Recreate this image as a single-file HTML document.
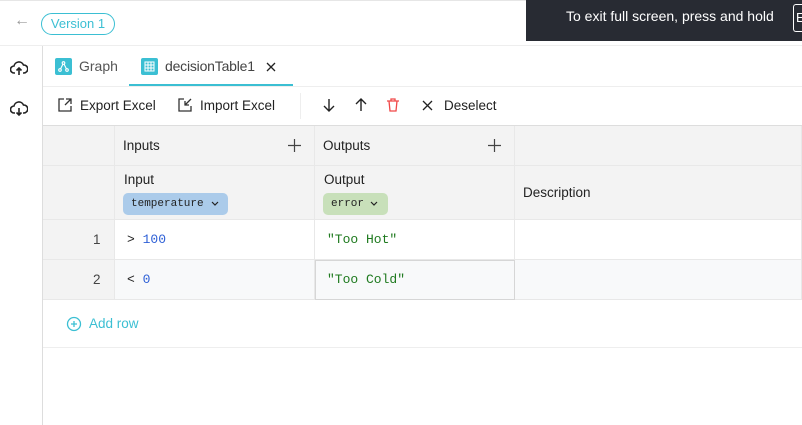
<!DOCTYPE html>
<html><head><meta charset="utf-8"><style>
*{box-sizing:border-box;margin:0;padding:0}
body{width:802px;height:425px;overflow:hidden;background:#fff;font-family:"Liberation Sans",sans-serif;font-size:13.5px;color:#222;position:relative}
.abs{position:absolute}
.mono{font-family:"Liberation Mono",monospace}
.cell{position:absolute;border-right:1px solid #e8e8e8;border-bottom:1px solid #e8e8e8}
</style></head><body>
<div class="abs" style="left:0;top:0;width:802px;height:1px;background:#e6e6e6"></div>
<div class="abs" style="left:14px;top:12px;color:#999;font-size:16px">←</div>
<div class="abs" style="left:41px;top:13px;width:74px;height:22px;border:1px solid #3bbfd3;border-radius:11px;color:#3bbfd3;font-size:13px;text-align:center;line-height:20px">Version 1</div>
<div class="abs" style="left:526px;top:0;width:276px;height:41px;background:#282b33;color:#fff;font-size:14px;line-height:33px;padding-left:40px">To exit full screen, press and hold</div>
<div class="abs" style="left:793px;top:4px;width:12px;height:28px;border:1px solid #fff;border-right:none;border-radius:3px 0 0 3px;color:#fff;font-size:13px;line-height:26px;padding-left:2px">E</div>
<div class="abs" style="left:0;top:45px;width:802px;height:1px;background:#eee"></div>
<div class="abs" style="left:42px;top:46px;width:1px;height:379px;background:#ddd"></div>
<svg class="abs" style="left:10px;top:61px" width="18" height="16" viewBox="0 0 18 16" fill="none" stroke="#222" stroke-width="1.6"><path d="M5 12H4a3.5 3.5 0 0 1 0-7 5 5 0 0 1 9.5-1A4 4 0 0 1 14 12h-1"/><path d="M9 14V7M6.5 9.5 9 7l2.5 2.5"/></svg>
<svg class="abs" style="left:10px;top:101px" width="18" height="16" viewBox="0 0 18 16" fill="none" stroke="#222" stroke-width="1.6"><path d="M5 12H4a3.5 3.5 0 0 1 0-7 5 5 0 0 1 9.5-1A4 4 0 0 1 14 12h-1"/><path d="M9 7v7M6.5 11.5 9 14l2.5-2.5"/></svg>
<div class="abs" style="left:55px;top:58px;width:17px;height:17px;background:#3bbfd3;border-radius:2px"></div>
<svg class="abs" style="left:55px;top:58px" width="17" height="17" viewBox="0 0 17 17" fill="none" stroke="#fff" stroke-width="1.1"><circle cx="8.5" cy="5" r="1.3"/><circle cx="5" cy="12" r="1.3"/><circle cx="12" cy="12" r="1.3"/><path d="M8 6 5.5 11M9 6l2.5 5"/></svg>
<div class="abs" style="left:79px;top:58px;color:#555;font-size:14px">Graph</div>
<div class="abs" style="left:141px;top:58px;width:17px;height:17px;background:#3bbfd3;border-radius:2px"></div>
<svg class="abs" style="left:141px;top:58px" width="17" height="17" viewBox="0 0 17 17" fill="none" stroke="#fff" stroke-width="1"><rect x="4" y="4" width="9" height="9"/><path d="M7 4v9M10 4v9M4 7h9M4 10h9"/></svg>
<div class="abs" style="left:165px;top:58px;color:#444;font-size:14px;letter-spacing:-0.2px">decisionTable1</div>
<svg class="abs" style="left:266px;top:62px" width="10" height="10" viewBox="0 0 10 10" stroke="#222" stroke-width="1.3"><path d="M1 1l8 8M9 1 1 9"/></svg>
<div class="abs" style="left:129px;top:84px;width:164px;height:2px;background:#3bbfd3"></div>
<div class="abs" style="left:43px;top:86px;width:759px;height:1px;background:#eee"></div>
<svg class="abs" style="left:58px;top:98px" width="14" height="14" viewBox="0 0 14 14" fill="none" stroke="#333" stroke-width="1.3"><path d="M6 1H1v12h12V8M8 1h5v5M13 1 7 7"/></svg>
<div class="abs" style="left:80px;top:98px">Export Excel</div>
<svg class="abs" style="left:178px;top:98px" width="14" height="14" viewBox="0 0 14 14" fill="none" stroke="#333" stroke-width="1.3"><path d="M6 1H1v12h12V8M13 1 7 7M7 3v4h4"/></svg>
<div class="abs" style="left:200px;top:98px">Import Excel</div>
<div class="abs" style="left:300px;top:93px;width:1px;height:26px;background:#eee"></div>
<svg class="abs" style="left:322px;top:98px" width="14" height="14" viewBox="0 0 14 14" fill="none" stroke="#222" stroke-width="1.4"><path d="M7 1v12M2 8l5 5 5-5"/></svg>
<svg class="abs" style="left:354px;top:98px" width="14" height="14" viewBox="0 0 14 14" fill="none" stroke="#222" stroke-width="1.4"><path d="M7 13V1M2 6l5-5 5 5"/></svg>
<svg class="abs" style="left:386px;top:98px" width="14" height="14" viewBox="0 0 14 14" fill="none" stroke="#f04848" stroke-width="1.3"><path d="M1 3h12M5 3V1h4v2M3 3l1 10h6l1-10"/></svg>
<svg class="abs" style="left:422px;top:100px" width="11" height="11" viewBox="0 0 11 11" stroke="#222" stroke-width="1.3"><path d="M1 1l9 9M10 1 1 10"/></svg>
<div class="abs" style="left:444px;top:98px">Deselect</div>
<div class="abs" style="left:43px;top:125px;width:759px;height:1px;background:#ddd"></div>
<div class="abs" style="left:43px;top:126px;width:759px;height:94px;background:#f3f3f3"></div>
<div class="cell" style="left:43px;top:126px;width:72px;height:40px"></div>
<div class="cell" style="left:115px;top:126px;width:200px;height:40px"></div>
<div class="cell" style="left:315px;top:126px;width:200px;height:40px"></div>
<div class="cell" style="left:515px;top:126px;width:287px;height:40px"></div>
<div class="abs" style="left:123px;top:138px">Inputs</div>
<svg class="abs" style="left:288px;top:139px" width="13" height="13" viewBox="0 0 13 13" stroke="#444" stroke-width="1.2"><path d="M6.5 0v13M0 6.5h13"/></svg>
<div class="abs" style="left:323px;top:138px">Outputs</div>
<svg class="abs" style="left:488px;top:139px" width="13" height="13" viewBox="0 0 13 13" stroke="#444" stroke-width="1.2"><path d="M6.5 0v13M0 6.5h13"/></svg>
<div class="cell" style="left:43px;top:166px;width:72px;height:54px"></div>
<div class="cell" style="left:115px;top:166px;width:200px;height:54px"></div>
<div class="cell" style="left:315px;top:166px;width:200px;height:54px"></div>
<div class="cell" style="left:515px;top:166px;width:287px;height:54px"></div>
<div class="abs" style="left:124px;top:172px">Input</div>
<div class="abs mono" style="left:123px;top:193px;width:105px;height:22px;background:#abcbea;border-radius:5px;font-size:11px;line-height:22px;padding-left:8px">temperature</div>
<svg class="abs" style="left:211px;top:201px" width="8" height="6" viewBox="0 0 8 6" fill="none" stroke="#222" stroke-width="1.2"><path d="M1 1l3 3 3-3"/></svg>
<div class="abs" style="left:324px;top:172px">Output</div>
<div class="abs mono" style="left:323px;top:193px;width:65px;height:22px;background:#c8e0ba;border-radius:5px;font-size:11px;line-height:22px;padding-left:8px">error</div>
<svg class="abs" style="left:370px;top:201px" width="8" height="6" viewBox="0 0 8 6" fill="none" stroke="#222" stroke-width="1.2"><path d="M1 1l3 3 3-3"/></svg>
<div class="abs" style="left:523px;top:185px">Description</div>
<div class="cell" style="left:43px;top:220px;width:72px;height:40px;background:#f3f3f3"></div>
<div class="cell" style="left:115px;top:220px;width:200px;height:40px"></div>
<div class="cell" style="left:315px;top:220px;width:200px;height:40px"></div>
<div class="cell" style="left:515px;top:220px;width:287px;height:40px"></div>
<div class="cell" style="left:43px;top:260px;width:72px;height:40px;background:#f3f3f3"></div>
<div class="cell" style="left:115px;top:260px;width:200px;height:40px;background:#f8f9fa"></div>
<div class="cell" style="left:515px;top:260px;width:287px;height:40px;background:#f8f9fa"></div>
<div class="abs" style="left:315px;top:260px;width:200px;height:40px;background:#f8f9fa;border:1px solid #d6d6d6"></div>
<div class="abs" style="left:93px;top:232px;color:#444">1</div>
<div class="abs" style="left:93px;top:272px;color:#444">2</div>
<div class="abs mono" style="left:127px;top:232px;font-size:13px">&gt; <span style="color:#2d5fd6">100</span></div>
<div class="abs mono" style="left:127px;top:272px;font-size:13px">&lt; <span style="color:#2d5fd6">0</span></div>
<div class="abs mono" style="left:327px;top:232px;font-size:13px;color:#1f7a1f">"Too Hot"</div>
<div class="abs mono" style="left:327px;top:272px;font-size:13px;color:#1f7a1f">"Too Cold"</div>
<svg class="abs" style="left:66px;top:316px" width="16" height="16" viewBox="0 0 16 16" fill="none" stroke="#3bbfd3" stroke-width="1.3"><circle cx="8" cy="8" r="6.5"/><path d="M8 5v6M5 8h6"/></svg>
<div class="abs" style="left:89px;top:316px;color:#3bbfd3">Add row</div>
<div class="abs" style="left:43px;top:347px;width:759px;height:1px;background:#eee"></div>
</body></html>
